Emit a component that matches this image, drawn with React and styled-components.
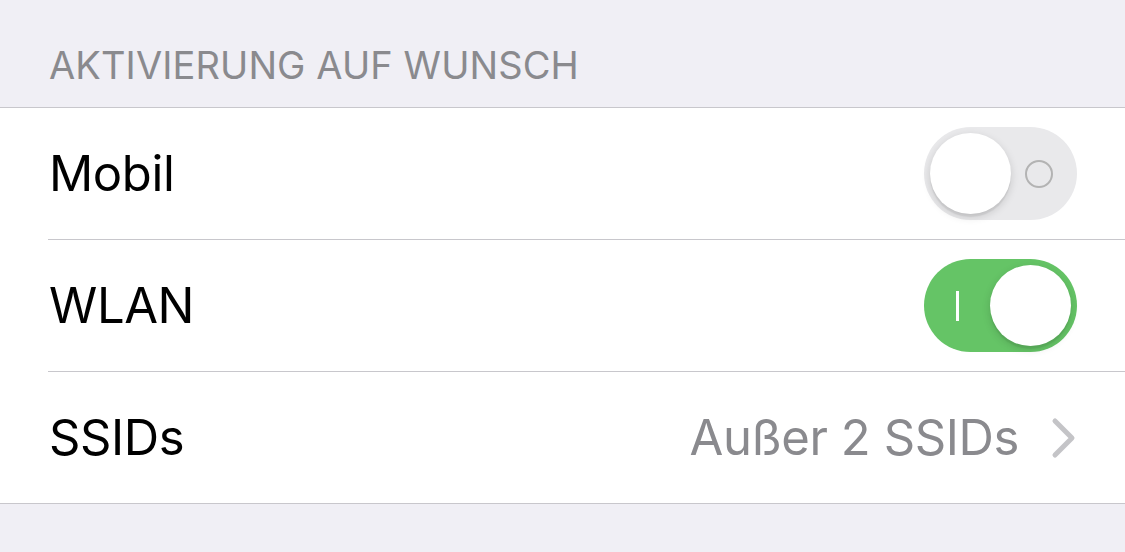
import React from "react";
import styled, { createGlobalStyle } from "styled-components";

const Global = createGlobalStyle`
  html, body { margin: 0; padding: 0; background: #f0eff5; }
  body { font-family: Inter, "Noto Sans", sans-serif; -webkit-font-smoothing: antialiased; }
`;

const Page = styled.div`
  width: 1125px;
  height: 552px;
  background: #f0eff5;
  display: flex;
  flex-direction: column;
  overflow: hidden;
`;

const SectionHeader = styled.div`
  height: 107px;
  box-sizing: border-box;
  display: flex;
  align-items: flex-end;
  padding: 0 0 23px 49px;
  font-size: 38px;
  line-height: 38px;
  letter-spacing: 0.1px;
  color: #8a8a8e;
`;

const List = styled.div`
  background: #ffffff;
  border-top: 1px solid #c8c7cc;
  border-bottom: 1px solid #c8c7cc;
`;

const Row = styled.div`
  height: 131px;
  box-sizing: content-box;
  margin-left: 48px;
  padding-right: 48px;
  display: flex;
  align-items: center;
  justify-content: space-between;
  border-top: ${(p) => (p.$first ? "none" : "1px solid #c8c7cc")};
`;

const Label = styled.span`
  font-size: 49px;
  color: #000;
  letter-spacing: -0.4px;
  padding-left: 1px;
`;

const Detail = styled.div`
  display: flex;
  align-items: center;
  gap: 32px;
  font-size: 49px;
  color: #8a8a8e;
  letter-spacing: -0.4px;
`;

const Track = styled.div`
  position: relative;
  width: 153px;
  height: 93px;
  border-radius: 47px;
  box-sizing: border-box;
  background: ${(p) => (p.$on ? "#65c466" : "#e9e9eb")};
  flex-shrink: 0;
`;

const Thumb = styled.div`
  position: absolute;
  top: 6px;
  left: ${(p) => (p.$on ? "66px" : "6px")};
  width: 81px;
  height: 81px;
  border-radius: 50%;
  background: #fff;
  box-shadow: 0 3px 8px rgba(0, 0, 0, 0.15), 0 3px 1px rgba(0, 0, 0, 0.06);
`;

const OnMark = styled.div`
  position: absolute;
  left: 32px;
  top: 32px;
  width: 3px;
  height: 30px;
  background: #fff;
`;

const OffMark = styled.div`
  position: absolute;
  left: 101px;
  top: 33px;
  width: 28px;
  height: 28px;
  box-sizing: border-box;
  border-radius: 50%;
  border: 2.5px solid #b3b3b3;
`;

const Toggle = ({ on }) => (
  <Track $on={on}>
    {on ? <OnMark /> : <OffMark />}
    <Thumb $on={on} />
  </Track>
);

const Chevron = () => (
  <svg width="26" height="42" viewBox="0 0 26 42">
    <path
      d="M4 4 L21 21 L4 38"
      fill="none"
      stroke="#c4c4c7"
      strokeWidth="5"
      strokeLinecap="round"
      strokeLinejoin="round"
    />
  </svg>
);

export default function App() {
  return (
    <Page>
      <Global />
      <SectionHeader>AKTIVIERUNG AUF WUNSCH</SectionHeader>
      <List>
        <Row $first>
          <Label>Mobil</Label>
          <Toggle on={false} />
        </Row>
        <Row>
          <Label>WLAN</Label>
          <Toggle on />
        </Row>
        <Row>
          <Label>SSIDs</Label>
          <Detail>
            Außer 2 SSIDs
            <Chevron />
          </Detail>
        </Row>
      </List>
    </Page>
  );
}
